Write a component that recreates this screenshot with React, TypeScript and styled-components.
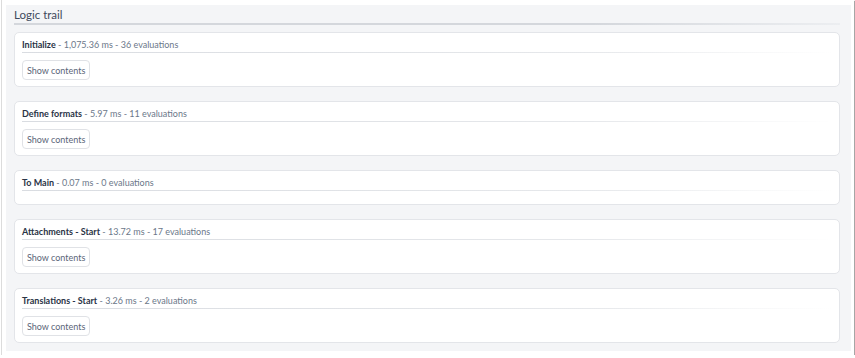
import styled, { createGlobalStyle } from "styled-components";

const GlobalStyle = createGlobalStyle`
  html, body {
    margin: 0;
    padding: 0;
    background: #ffffff;
  }
  body {
    font-family: Lato, "Open Sans", "Liberation Sans", sans-serif;
  }
`;

const Frame = styled.div`
  width: 845px;
  height: 346px;
  margin-left: 1px;
  padding: 5px 3px 4px 4px;
  background: #ffffff;
  border-left: 1px solid #dcdcdc;
  box-shadow: 1px 1px 1px rgba(0, 0, 0, 0.35);
`;

const Panel = styled.section`
  height: 100%;
  box-sizing: border-box;
  padding: 3px 11px 8px 8px;
  background: #f4f5f7;
  display: flex;
  flex-direction: column;
`;

const Title = styled.h2`
  margin: 0 0 7px;
  padding-bottom: 1px;
  font-size: 11.5px;
  line-height: 14px;
  font-weight: 400;
  color: #3e4a5c;
  border-bottom: 2px solid transparent;
  border-image: linear-gradient(to right, #d4d7dc 0%, #d4d7dc 70%, #eceef1 100%) 1;
`;

const List = styled.div`
  display: flex;
  flex-direction: column;
  gap: 14px;
`;

const Card = styled.div`
  background: #ffffff;
  border: 1px solid #e3e5e9;
  border-radius: 5px;
  padding: 6px 7px;
`;

const Heading = styled.div`
  font-size: 9px;
  line-height: 12px;
  color: #6b7789;
  padding-bottom: 1px;
  margin-bottom: 7px;
  border-bottom: 1px solid transparent;
  border-image: linear-gradient(to right, #d9dce1 0%, #e6e8eb 70%, #ffffff 100%) 1;

  b {
    color: #2a3446;
    font-weight: 700;
  }
`;

const ShowButton = styled.button`
  display: block;
  height: 20px;
  padding: 0 4px;
  background: #ffffff;
  border: 1px solid #e0e2e6;
  border-radius: 4px;
  font-family: inherit;
  font-size: 9px;
  color: #5a6578;
  cursor: pointer;
`;

interface Step {
  name: string;
  ms: string;
  evaluations: number;
}

const steps: Step[] = [
  { name: "Initialize", ms: "1,075.36", evaluations: 36 },
  { name: "Define formats", ms: "5.97", evaluations: 11 },
  { name: "To Main", ms: "0.07", evaluations: 0 },
  { name: "Attachments - Start", ms: "13.72", evaluations: 17 },
  { name: "Translations - Start", ms: "3.26", evaluations: 2 },
];

function App() {
  return (
    <>
      <GlobalStyle />
      <Frame>
        <Panel>
          <Title>Logic trail</Title>
          <List>
            {steps.map((step) => (
              <Card key={step.name}>
                <Heading>
                  <b>{step.name}</b> - {step.ms} ms - {step.evaluations} evaluations
                </Heading>
                {step.evaluations > 0 && <ShowButton>Show contents</ShowButton>}
              </Card>
            ))}
          </List>
        </Panel>
      </Frame>
    </>
  );
}

export default App;
